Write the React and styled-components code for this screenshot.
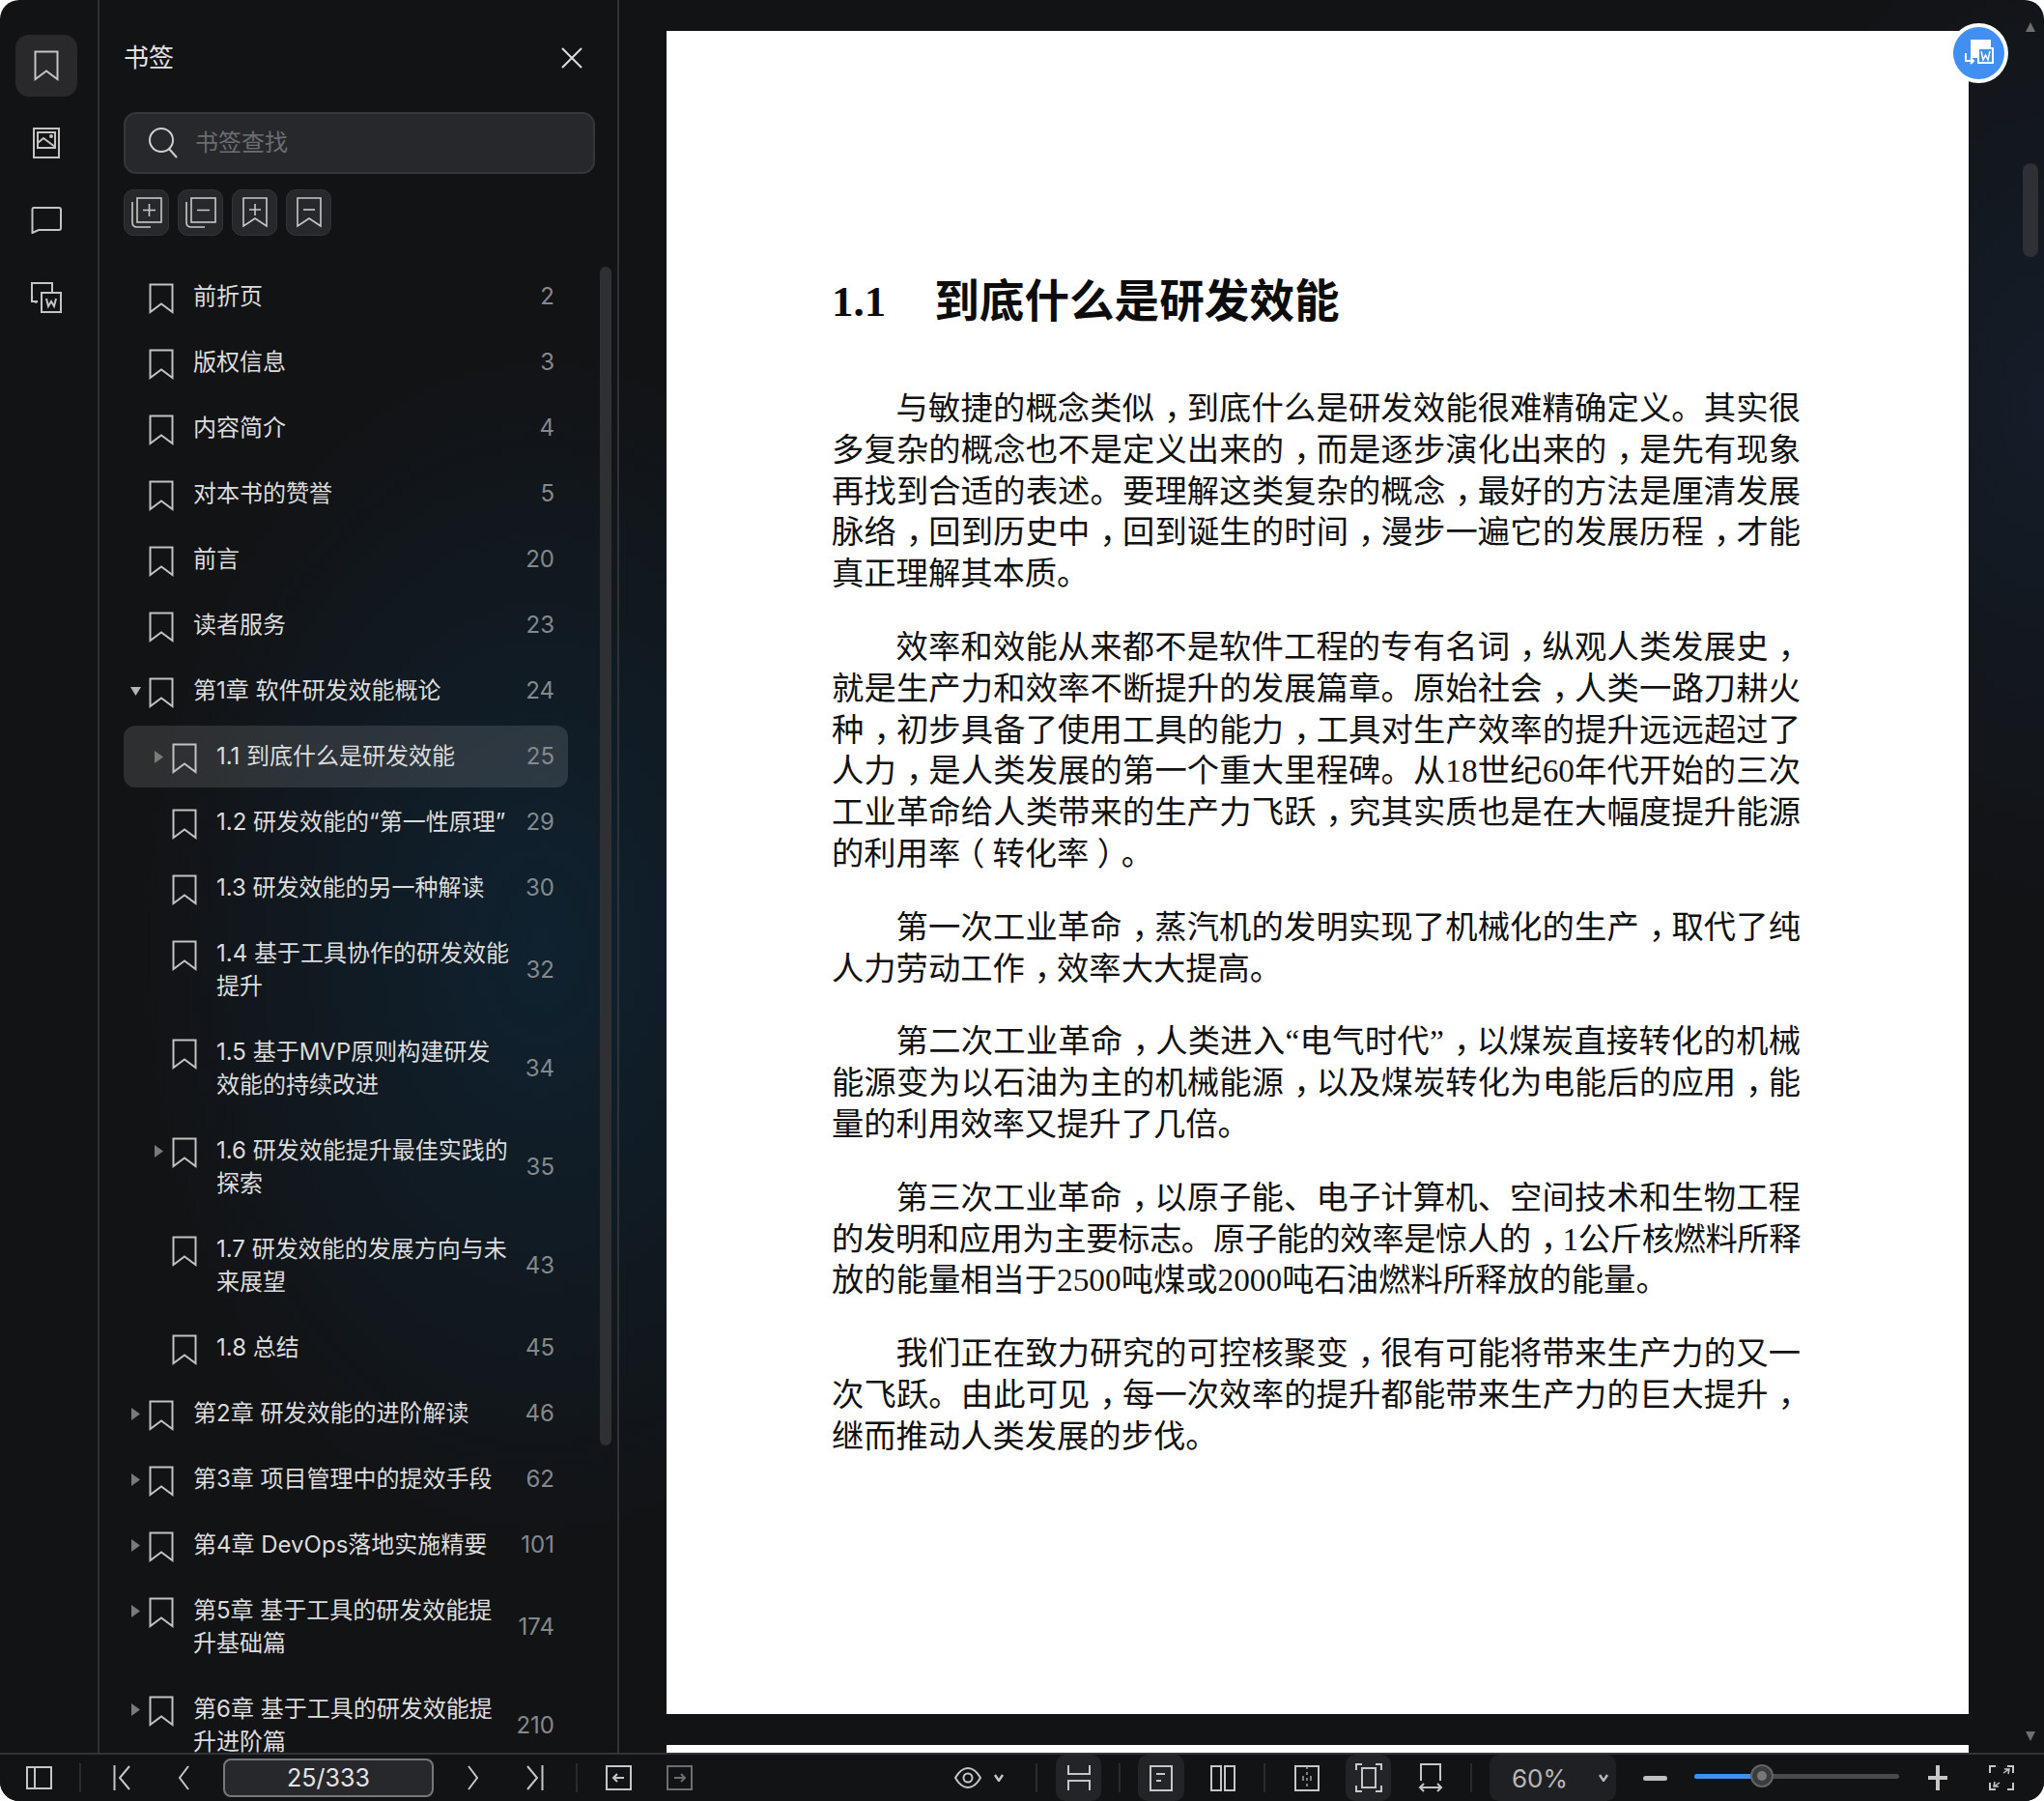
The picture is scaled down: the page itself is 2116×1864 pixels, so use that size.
import React from "react";
import styled, { createGlobalStyle } from "styled-components";

const Global = createGlobalStyle`
  html, body { margin: 0; padding: 0; background: #fff; }
  * { box-sizing: border-box; }
`;

const UI_FONT = `Inter, "Noto Sans CJK SC", sans-serif`;

const Win = styled.div`
  position: relative;
  width: 2116px;
  height: 1864px;
  border-radius: 20px;
  overflow: hidden;
  display: flex;
  flex-direction: column;
  background:
    radial-gradient(ellipse 420px 620px at 560px 980px, #0f2230 0%, rgba(15,34,48,0) 100%),
    radial-gradient(ellipse 300px 520px at 2116px 420px, #141d29 0%, rgba(20,29,41,0) 100%),
    #121315;
  font-family: ${UI_FONT};
  color: #dcdcdc;
`;
const Main = styled.div`
  flex: 1;
  min-height: 0;
  display: flex;
`;
const Rail = styled.nav`
  width: 103px;
  flex: none;
  border-right: 2px solid #303134;
  padding: 36px 0 0 16px;
  display: flex;
  flex-direction: column;
  gap: 16px;
`;
const RailBtn = styled.div`
  width: 64px;
  height: 64px;
  border-radius: 14px;
  display: flex;
  align-items: center;
  justify-content: center;
  color: #c4c4c4;
  background: ${p => (p.$active ? "#29292c" : "transparent")};
`;
const Panel = styled.aside`
  position: relative;
  width: 538px;
  flex: none;
  border-right: 2px solid #303134;
  display: flex;
  flex-direction: column;
  padding-left: 25px;
  min-height: 0;
`;
const PanelHead = styled.div`
  height: 40px;
  margin-top: 40px;
  width: 488px;
  display: flex;
  align-items: center;
  justify-content: space-between;
  padding-right: 13px;
`;
const PanelTitle = styled.div`
  font-size: 26px;
  line-height: 38px;
  margin-bottom: 1px;
  color: #e2e2e2;
`;
const Search = styled.div`
  margin-top: 36px;
  width: 488px;
  height: 64px;
  border-radius: 13px;
  background: #27282c;
  border: 2px solid #36373b;
  display: flex;
  align-items: center;
  gap: 18px;
  padding-left: 24px;
  color: #cfcfcf;
`;
const Placeholder = styled.div`
  font-size: 24px;
  line-height: 32px;
  margin-bottom: 1px;
  color: #6c6d70;
`;
const Tools = styled.div`
  margin-top: 16px;
  display: flex;
  gap: 9px;
`;
const ToolBtn = styled.div`
  width: 47px;
  height: 48px;
  border-radius: 10px;
  background: #27282c;
  border: 1px solid #333438;
  display: flex;
  align-items: center;
  justify-content: center;
  color: #c8c8c8;
`;
const List = styled.div`
  margin-top: 31px;
  flex: 1;
  min-height: 0;
  overflow: hidden;
  width: 460px;
  display: flex;
  flex-direction: column;
  gap: 4px;
`;
const Row = styled.div`
  flex: none;
  display: flex;
  align-items: flex-start;
  padding: 15px 14px 15px ${p => p.$depth * 24}px;
  border-radius: 12px;
  background: ${p => (p.$selected ? "rgba(255,255,255,0.12)" : "transparent")};
`;
const CaretSlot = styled.div`
  width: 26px;
  height: 34px;
  flex: none;
  padding: 11px 0 0 7px;
  color: ${p => (p.$open ? "#b5b5b5" : "#7a7a7a")};
`;
const Mark = styled.div`
  width: 26px;
  height: 32px;
  flex: none;
  margin: 3px 0 -1px;
  color: #c2c2c2;
`;
const RowText = styled.div`
  flex: 1;
  min-width: 0;
  margin-left: 20px;
  font-size: 24px;
  line-height: 34px;
  white-space: pre-line;
  color: #dcdcdc;
`;
const Num = styled.div`
  flex: none;
  align-self: center;
  font-size: 24px;
  line-height: 34px;
  color: #84898e;
`;
const PanelThumb = styled.div`
  position: absolute;
  left: 518px;
  top: 276px;
  width: 12px;
  height: 1220px;
  border-radius: 6px;
  background: #2e3034;
`;
const DocArea = styled.main`
  position: relative;
  flex: 1;
  min-width: 0;
  overflow: hidden;
  padding: 32px 0 0 49px;
  display: flex;
  flex-direction: column;
  gap: 32px;
`;
const Page = styled.article`
  flex: none;
  width: 1348px;
  height: ${p => p.$h}px;
  background: #fff;
  padding: 0 174px 0 171px;
  color: #111;
  font-family: "Liberation Serif", "Noto Sans CJK SC", serif;
  overflow: hidden;
`;
const Heading = styled.h1`
  margin: 250px 0 60px 0;
  height: 60px;
  display: flex;
  align-items: center;
  gap: 50px;
  font-size: 45px;
  font-weight: 700;
  color: #0c0c0c;
`;
const HeadingCjk = styled.span`
  font-family: "Noto Sans CJK SC", sans-serif;
  font-size: 46.6px;
  font-weight: 700;
  line-height: 60px;
  margin-bottom: 8px;
`;
const Para = styled.div`
  margin-bottom: 33px;
  font-size: 33.3px;
  line-height: 42.8px;
  text-spacing-trim: space-all;
`;
const Line = styled.div`
  height: 42.8px;
  text-align: ${p => (p.$last ? "left" : "justify")};
  text-align-last: ${p => (p.$last ? "left" : "justify")};
  text-indent: ${p => (p.$first ? "66.6px" : "0")};
  letter-spacing: ${p => (p.$tight ? "-0.5px" : "0")};
`;
const Punct = styled.span`
  position: relative;
  left: ${p => p.$shift}em;
`;
const ArrowMark = styled.div`
  position: absolute;
  left: ${p => p.$x}px;
  top: ${p => p.$y}px;
  width: 0;
  height: 0;
  border-left: 5px solid transparent;
  border-right: 5px solid transparent;
  ${p => (p.$down ? "border-top: 10px solid #6f6f6f;" : "border-bottom: 10px solid #6f6f6f;")}
`;
const DocThumb = styled.div`
  position: absolute;
  left: 1453px;
  top: 169px;
  width: 16px;
  height: 97px;
  border-radius: 8px;
  background: #2f3035;
`;
const FloatBtn = styled.div`
  position: absolute;
  left: 1377px;
  top: 24px;
  width: 61px;
  height: 62px;
  border-radius: 50%;
  background: #418ff0;
  border: 4px solid #fff;
  display: flex;
  align-items: center;
  justify-content: center;
  color: #fff;
`;
const Bar = styled.footer`
  flex: none;
  height: 50px;
  border-top: 2px solid #333437;
  display: flex;
  align-items: stretch;
  color: #c6c6c6;
  background: #121315;
`;
const Slot = styled.div`
  flex: none;
  width: ${p => p.$w}px;
  display: flex;
  align-items: center;
  justify-content: center;
  color: ${p => (p.$dim ? "#6e6e6e" : "inherit")};
  background: ${p => (p.$active ? "#232427" : "transparent")};
  border-radius: ${p => (p.$active ? "10px" : "0")};
`;
const Sep = styled.div`
  width: 2px;
  height: 30px;
  background: #2a2b2e;
`;
const PageInput = styled.div`
  width: 218px;
  height: 40px;
  border-radius: 8px;
  background: #27282c;
  border: 2px solid #77787b;
  display: flex;
  align-items: center;
  justify-content: center;
  font-size: 25px;
  color: #e4e4e4;
`;
const ZoomTile = styled.div`
  flex: none;
  width: 131px;
  background: #1f2023;
  border-radius: 10px;
  display: flex;
  align-items: center;
  padding: 0 8px 0 23px;
  justify-content: space-between;
  font-size: 26px;
  color: #b8b8b8;
`;
const Dash = styled.div`
  width: 25px;
  height: 5px;
  border-radius: 3px;
  background: #c0c0c0;
`;
const Track = styled.div`
  position: relative;
  width: 212px;
  height: 5px;
  align-self: center;
  border-radius: 3px;
  background: #4a4a4c;
  margin-top: -4px;
`;
const TrackFill = styled.div`
  height: 100%;
  border-radius: 3px;
  background: #428ff0;
`;
const Knob = styled.div`
  position: absolute;
  top: -10px;
  width: 24px;
  height: 24px;
  margin-left: -12px;
  border-radius: 50%;
  background: #3b3c3e;
  border: 2px solid #636466;
  display: flex;
  align-items: center;
  justify-content: center;
  &::after {
    content: "";
    width: 10px;
    height: 10px;
    border-radius: 50%;
    background: #77787a;
  }
`;

const Ico = ({ w, h, sw = 2, children, fill = "none" }) => (
  <svg width={w} height={h} viewBox={`0 0 ${w} ${h}`} fill={fill} stroke="currentColor" strokeWidth={sw} style={{ display: "block", flex: "none" }}>
    {children}
  </svg>
);

const BookmarkIcon = () => <Ico w={26} h={32}><path d="M1.5 1.5H24.5V30L13 21.5 1.5 30Z" /></Ico>;
const CaretIcon = ({ open }) => (
  <svg width="11" height="13" viewBox="0 0 11 13" fill="currentColor" style={{ display: "block" }}>
    {open ? <path d="M0 2H11L5.5 11Z" /> : <path d="M1 0L10 6.5 1 13Z" />}
  </svg>
);

const rows = [
  { t: "前折页", n: 2 },
  { t: "版权信息", n: 3 },
  { t: "内容简介", n: 4 },
  { t: "对本书的赞誉", n: 5 },
  { t: "前言", n: 20 },
  { t: "读者服务", n: 23 },
  { t: "第1章 软件研发效能概论", n: 24, c: "open" },
  { t: "1.1 到底什么是研发效能", n: 25, d: 1, c: "closed", sel: true },
  { t: "1.2 研发效能的“第一性原理”", n: 29, d: 1 },
  { t: "1.3 研发效能的另一种解读", n: 30, d: 1 },
  { t: "1.4 基于工具协作的研发效能\n提升", n: 32, d: 1 },
  { t: "1.5 基于MVP原则构建研发\n效能的持续改进", n: 34, d: 1 },
  { t: "1.6 研发效能提升最佳实践的\n探索", n: 35, d: 1, c: "closed" },
  { t: "1.7 研发效能的发展方向与未\n来展望", n: 43, d: 1 },
  { t: "1.8 总结", n: 45, d: 1 },
  { t: "第2章 研发效能的进阶解读", n: 46, c: "closed" },
  { t: "第3章 项目管理中的提效手段", n: 62, c: "closed" },
  { t: "第4章 DevOps落地实施精要", n: 101, c: "closed" },
  { t: "第5章 基于工具的研发效能提\n升基础篇", n: 174, c: "closed" },
  { t: "第6章 基于工具的研发效能提\n升进阶篇", n: 210, c: "closed" },
];

const paras = [
  ["与敏捷的概念类似，到底什么是研发效能很难精确定义。其实很", "多复杂的概念也不是定义出来的，而是逐步演化出来的，是先有现象", "再找到合适的表述。要理解这类复杂的概念，最好的方法是厘清发展", "脉络，回到历史中，回到诞生的时间，漫步一遍它的发展历程，才能", "真正理解其本质。"],
  ["效率和效能从来都不是软件工程的专有名词，纵观人类发展史，", "就是生产力和效率不断提升的发展篇章。原始社会，人类一路刀耕火", "种，初步具备了使用工具的能力，工具对生产效率的提升远远超过了", "人力，是人类发展的第一个重大里程碑。从18世纪60年代开始的三次", "工业革命给人类带来的生产力飞跃，究其实质也是在大幅度提升能源", "的利用率（转化率）。"],
  ["第一次工业革命，蒸汽机的发明实现了机械化的生产，取代了纯", "人力劳动工作，效率大大提高。"],
  ["第二次工业革命，人类进入“电气时代”，以煤炭直接转化的机械", "能源变为以石油为主的机械能源，以及煤炭转化为电能后的应用，能", "量的利用效率又提升了几倍。"],
  ["第三次工业革命，以原子能、电子计算机、空间技术和生物工程", "的发明和应用为主要标志。原子能的效率是惊人的，1公斤核燃料所释", "放的能量相当于2500吨煤或2000吨石油燃料所释放的能量。"],
  ["我们正在致力研究的可控核聚变，很有可能将带来生产力的又一", "次飞跃。由此可见，每一次效率的提升都能带来生产力的巨大提升，", "继而推动人类发展的步伐。"],
];

const SHIFTS = { "，": 0.3, "（": -0.25, "）": 0.25 };

const Typeset = ({ text }) =>
  text.split(/([，（）])/).map((part, i) =>
    SHIFTS[part] ? <Punct key={i} $shift={SHIFTS[part]}>{part}</Punct> : part
  );

export default function App() {
  return (
    <Win>
      <Global />
      <Main>
        <Rail>
          <RailBtn $active><BookmarkIcon /></RailBtn>
          <RailBtn>
            <Ico w={28} h={32}><rect x="1" y="1" width="26" height="30" /><rect x="5" y="5" width="18" height="16" /><path d="M5 16L11 11 23 20" /><circle cx="19" cy="9" r="1" /></Ico>
          </RailBtn>
          <RailBtn>
            <Ico w={32} h={28}><path d="M3 1H29Q31 1 31 3V22Q31 24 29 24H8L1.500 27V3Q1.500 1 3 1Z" /></Ico>
          </RailBtn>
          <RailBtn>
            <Ico w={32} h={32}><path d="M22 10V1H1V20H7" /><path d="M4 21L7 20" /><rect x="11" y="11" width="20" height="20" /><path d="M16 17L18 25 21 20 24 25 26 17" /></Ico>
          </RailBtn>
        </Rail>
        <Panel>
          <PanelHead>
            <PanelTitle>书签</PanelTitle>
            <Ico w={22} h={22}><path d="M1 1L21 21M21 1L1 21" /></Ico>
          </PanelHead>
          <Search>
            <Ico w={30} h={32}><circle cx="13" cy="13" r="12" /><path d="M21 22L29 31" /></Ico>
            <Placeholder>书签查找</Placeholder>
          </Search>
          <Tools>
            <ToolBtn><Ico w={32} h={32} sw={1.6}><rect x="6" y="1" width="25" height="25" /><path d="M18.500 7V20M12 13.500H25" /><path d="M1 5V26Q1 31 6 31H20" /></Ico></ToolBtn>
            <ToolBtn><Ico w={32} h={32} sw={1.6}><rect x="6" y="1" width="25" height="25" /><path d="M12 13.500H25" /><path d="M1 5V26Q1 31 6 31H20" /></Ico></ToolBtn>
            <ToolBtn><Ico w={26} h={32} sw={1.6}><path d="M1 1H25V30L13 22 1 30Z" /><path d="M13 7V19M7 13H19" /></Ico></ToolBtn>
            <ToolBtn><Ico w={26} h={32} sw={1.6}><path d="M1 1H25V30L13 22 1 30Z" /><path d="M7 13H19" /></Ico></ToolBtn>
          </Tools>
          <List>
            {rows.map(r => (
              <Row key={r.t} $depth={r.d || 0} $selected={r.sel}>
                <CaretSlot $open={r.c === "open"}>{r.c && <CaretIcon open={r.c === "open"} />}</CaretSlot>
                <Mark><BookmarkIcon /></Mark>
                <RowText>{r.t}</RowText>
                <Num>{r.n}</Num>
              </Row>
            ))}
          </List>
          <PanelThumb />
        </Panel>
        <DocArea>
          <Page $h={1742}>
            <Heading>1.1<HeadingCjk>到底什么是研发效能</HeadingCjk></Heading>
            {paras.map(lines => (
              <Para key={lines[0]}>
                {lines.map((l, i) => (
                  <Line key={l} $first={i === 0} $last={i === lines.length - 1} $tight={l.includes("1公斤")}>
                    <Typeset text={l} />
                  </Line>
                ))}
              </Para>
            ))}
          </Page>
          <Page $h={40} />
          <ArrowMark $x={1456} $y={23} />
          <ArrowMark $x={1456} $y={1792} $down />
          <DocThumb />
          <FloatBtn>
            <Ico w={32} h={28} sw={2}>
              <path d="M8 1H27V7H14V18H8Z" fill="currentColor" />
              <rect x="15" y="9" width="15" height="15" />
              <path d="M18 12L20 21 22.500 16 25 21 27 12" strokeWidth="1.500" />
              <path d="M2 14V22H10M7 19L10 22 7 25" />
            </Ico>
          </FloatBtn>
        </DocArea>
      </Main>
      <Bar>
        <Slot $w={81}><Ico w={27} h={24}><rect x="1" y="1" width="25" height="22" /><path d="M9 1V23" /></Ico></Slot>
        <Slot $w={4}><Sep /></Slot>
        <Slot $w={82}><Ico w={18} h={28}><path d="M1.500 1V27M17 2L7 14 17 26" /></Ico></Slot>
        <Slot $w={46}><Ico w={12} h={28}><path d="M11 2L2 14 11 26" /></Ico></Slot>
        <Slot $w={254}><PageInput>25/333</PageInput></Slot>
        <Slot $w={46}><Ico w={12} h={28}><path d="M1 2L10 14 1 26" /></Ico></Slot>
        <Slot $w={82}><Ico w={18} h={28}><path d="M16.500 1V27M1 2L11 14 1 26" /></Ico></Slot>
        <Slot $w={4}><Sep /></Slot>
        <Slot $w={83}><Ico w={27} h={26}><rect x="1" y="1" width="25" height="24" /><path d="M19 13H8M12 9L8 13 12 17" /></Ico></Slot>
        <Slot $w={43} $dim><Ico w={27} h={26}><rect x="1" y="1" width="25" height="24" /><path d="M8 13H19M15 9L19 13 15 17" /></Ico></Slot>
        <Slot $w={252} />
        <Slot $w={50}>
          <Ico w={30} h={22}><path d="M2 11C6 4 10 1 15 1S24 4 28 11C24 18 20 21 15 21S6 18 2 11Z" /><circle cx="15" cy="11" r="4.500" /></Ico>
        </Slot>
        <Slot $w={14}><Ico w={10} h={8} sw={2.4}><path d="M1 1L5 7 9 1" /></Ico></Slot>
        <Slot $w={12} />
        <Slot $w={40}><Sep /></Slot>
        <Slot $w={47} $active><Ico w={24} h={28}><path d="M1 1V10H23V1M1 27V17H23V27" /></Ico></Slot>
        <Slot $w={38}><Sep /></Slot>
        <Slot $w={48} $active><Ico w={24} h={27}><rect x="1" y="1" width="22" height="25" /><path d="M7 9H16M7 16H12" /></Ico></Slot>
        <Slot $w={80}><Ico w={26} h={27}><rect x="1" y="1" width="10" height="25" /><rect x="15" y="1" width="10" height="25" /></Ico></Slot>
        <Slot $w={6}><Sep /></Slot>
        <Slot $w={81}><Ico w={26} h={27}><rect x="1" y="1" width="24" height="25" /><path d="M13 1V26" strokeDasharray="3 3" strokeWidth="1.200" /><path d="M9 11V16M17 11V16" strokeWidth="1.200" /></Ico></Slot>
        <Slot $w={47} $active><Ico w={28} h={30}><path d="M1 7V1H7M21 1H27V7M27 23V29H21M7 29H1V23" /><rect x="7" y="5" width="14" height="20" /></Ico></Slot>
        <Slot $w={82}><Ico w={26} h={30}><path d="M3 18V1H23V18" /><path d="M2 25H24M6 21L2 25 6 29M20 21L24 25 20 29" /></Ico></Slot>
        <Slot $w={2}><Sep /></Slot>
        <Slot $w={18} />
        <ZoomTile>60%<Ico w={10} h={8} sw={2.4}><path d="M1 1L5 7 9 1" /></Ico></ZoomTile>
        <Slot $w={81}><Dash /></Slot>
        <Track>
          <TrackFill style={{ width: "33%" }} />
          <Knob style={{ left: "33%" }} />
        </Track>
        <Slot $w={80}><Ico w={20} h={26} sw={4}><path d="M10 0V26M0 13H20" /></Ico></Slot>
        <Slot $w={51}><Ico w={28} h={28}><path d="M2 9V2H8M20 2H26V9M26 19V26H20M8 26H2V19" /><path d="M16 9L22 5M21 10L22 5 17 5M12 19L6 23M7 18L6 23 11 23" strokeWidth="1.500" /></Ico></Slot>
      </Bar>
    </Win>
  );
}
